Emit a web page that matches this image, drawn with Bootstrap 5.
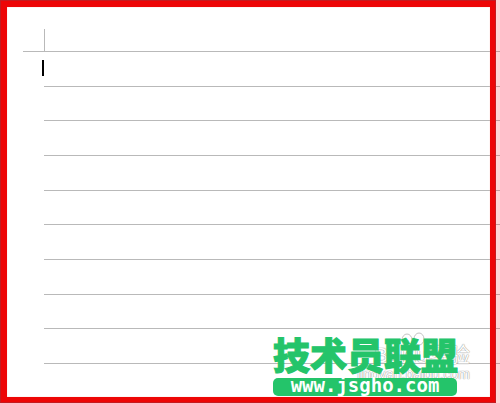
<!DOCTYPE html>
<html lang="zh-CN">
<head>
<meta charset="utf-8">
<meta name="viewport" content="width=device-width, initial-scale=1">
<title>技术员联盟</title>
<link href="https://cdn.jsdelivr.net/npm/bootstrap@5.3.0/dist/css/bootstrap.min.css" rel="stylesheet">
<style>
body { font-family: "Liberation Sans", "Noto Sans CJK SC", sans-serif; background: #fff; }
.sheet { padding: 7px 0 6px 7px; }
.frame { inset: 0; border: 7px solid #ed0606; border-bottom-width: 6px; border-right-width: 6px; margin-right: 4px; box-shadow: inset 0 0 1px #ff9c90; outline: 1px solid #c41c20; outline-offset: -1px; }
.tint { top: 0; right: 0; bottom: 0; width: 4px; background: rgba(255, 0, 0, .16); }
.page-top { height: 45px; padding-left: 16px; }
.corner { width: 22px; height: 22px; border-right: 1px solid #b9b9b9; }
.top-rule { border-bottom: 1px solid #b9b9b9; }
.ruled { margin-left: 37px; padding-bottom: 33px; }
.ruled > div { border-bottom: 1px solid #b9b9b9; }
.caret { width: 2px; height: 16px; background: #000; left: -2px; top: 8px; }
.watermark { right: 30px; bottom: 22px; color: #fff; text-shadow: 0 0 1px #888, 0 0 1px #aaa; }
.watermark-name { font-size: 21px; line-height: 24px; }
.watermark-url { font-size: 14px; line-height: 14px; }
.watermark svg { right: 42px; top: -14px; }
.brand { right: 43px; bottom: 7px; width: 184px; }
.brand-name { color: #24c46a; font: 900 37px/48px "Noto Sans CJK SC", sans-serif; -webkit-text-stroke: 1px #24c46a; }
.brand-url { background: #24c46a; color: #fff; padding-bottom: 4px; font: bold 19px/14px "DejaVu Sans Mono", monospace; border-radius: 5px; }
</style>
</head>
<body>
<main class="sheet position-relative min-vh-100 d-flex flex-column bg-white">
  <div class="page-top d-flex flex-column justify-content-end">
    <div class="corner"></div>
    <div class="top-rule"></div>
  </div>
  <div class="ruled position-relative flex-grow-1 d-flex flex-column">
    <span class="caret position-absolute"></span>
    <div class="flex-fill"></div><div class="flex-fill"></div><div class="flex-fill"></div>
    <div class="flex-fill"></div><div class="flex-fill"></div><div class="flex-fill"></div>
    <div class="flex-fill"></div><div class="flex-fill"></div><div class="flex-fill"></div>
  </div>
  <div class="frame position-absolute pe-none"></div>
  <div class="tint position-absolute pe-none"></div>
  <div class="watermark position-absolute text-end">
    <svg class="position-absolute" width="30" height="24" viewBox="0 0 30 24" fill="#fff" stroke="#c4c4c4"><ellipse cx="9" cy="11" rx="5" ry="6"/><ellipse cx="21" cy="10" rx="5" ry="6"/></svg>
    <div class="watermark-name">Baidu经验</div>
    <div class="watermark-url">jingyan.baidu.com</div>
  </div>
  <div class="brand position-absolute text-center">
    <div class="brand-name text-nowrap">技术员联盟</div>
    <a class="brand-url d-block text-decoration-none" href="http://www.jsgho.com">www.jsgho.com</a>
  </div>
</main>
<script src="https://cdn.jsdelivr.net/npm/bootstrap@5.3.0/dist/js/bootstrap.bundle.min.js"></script>
</body>
</html>
